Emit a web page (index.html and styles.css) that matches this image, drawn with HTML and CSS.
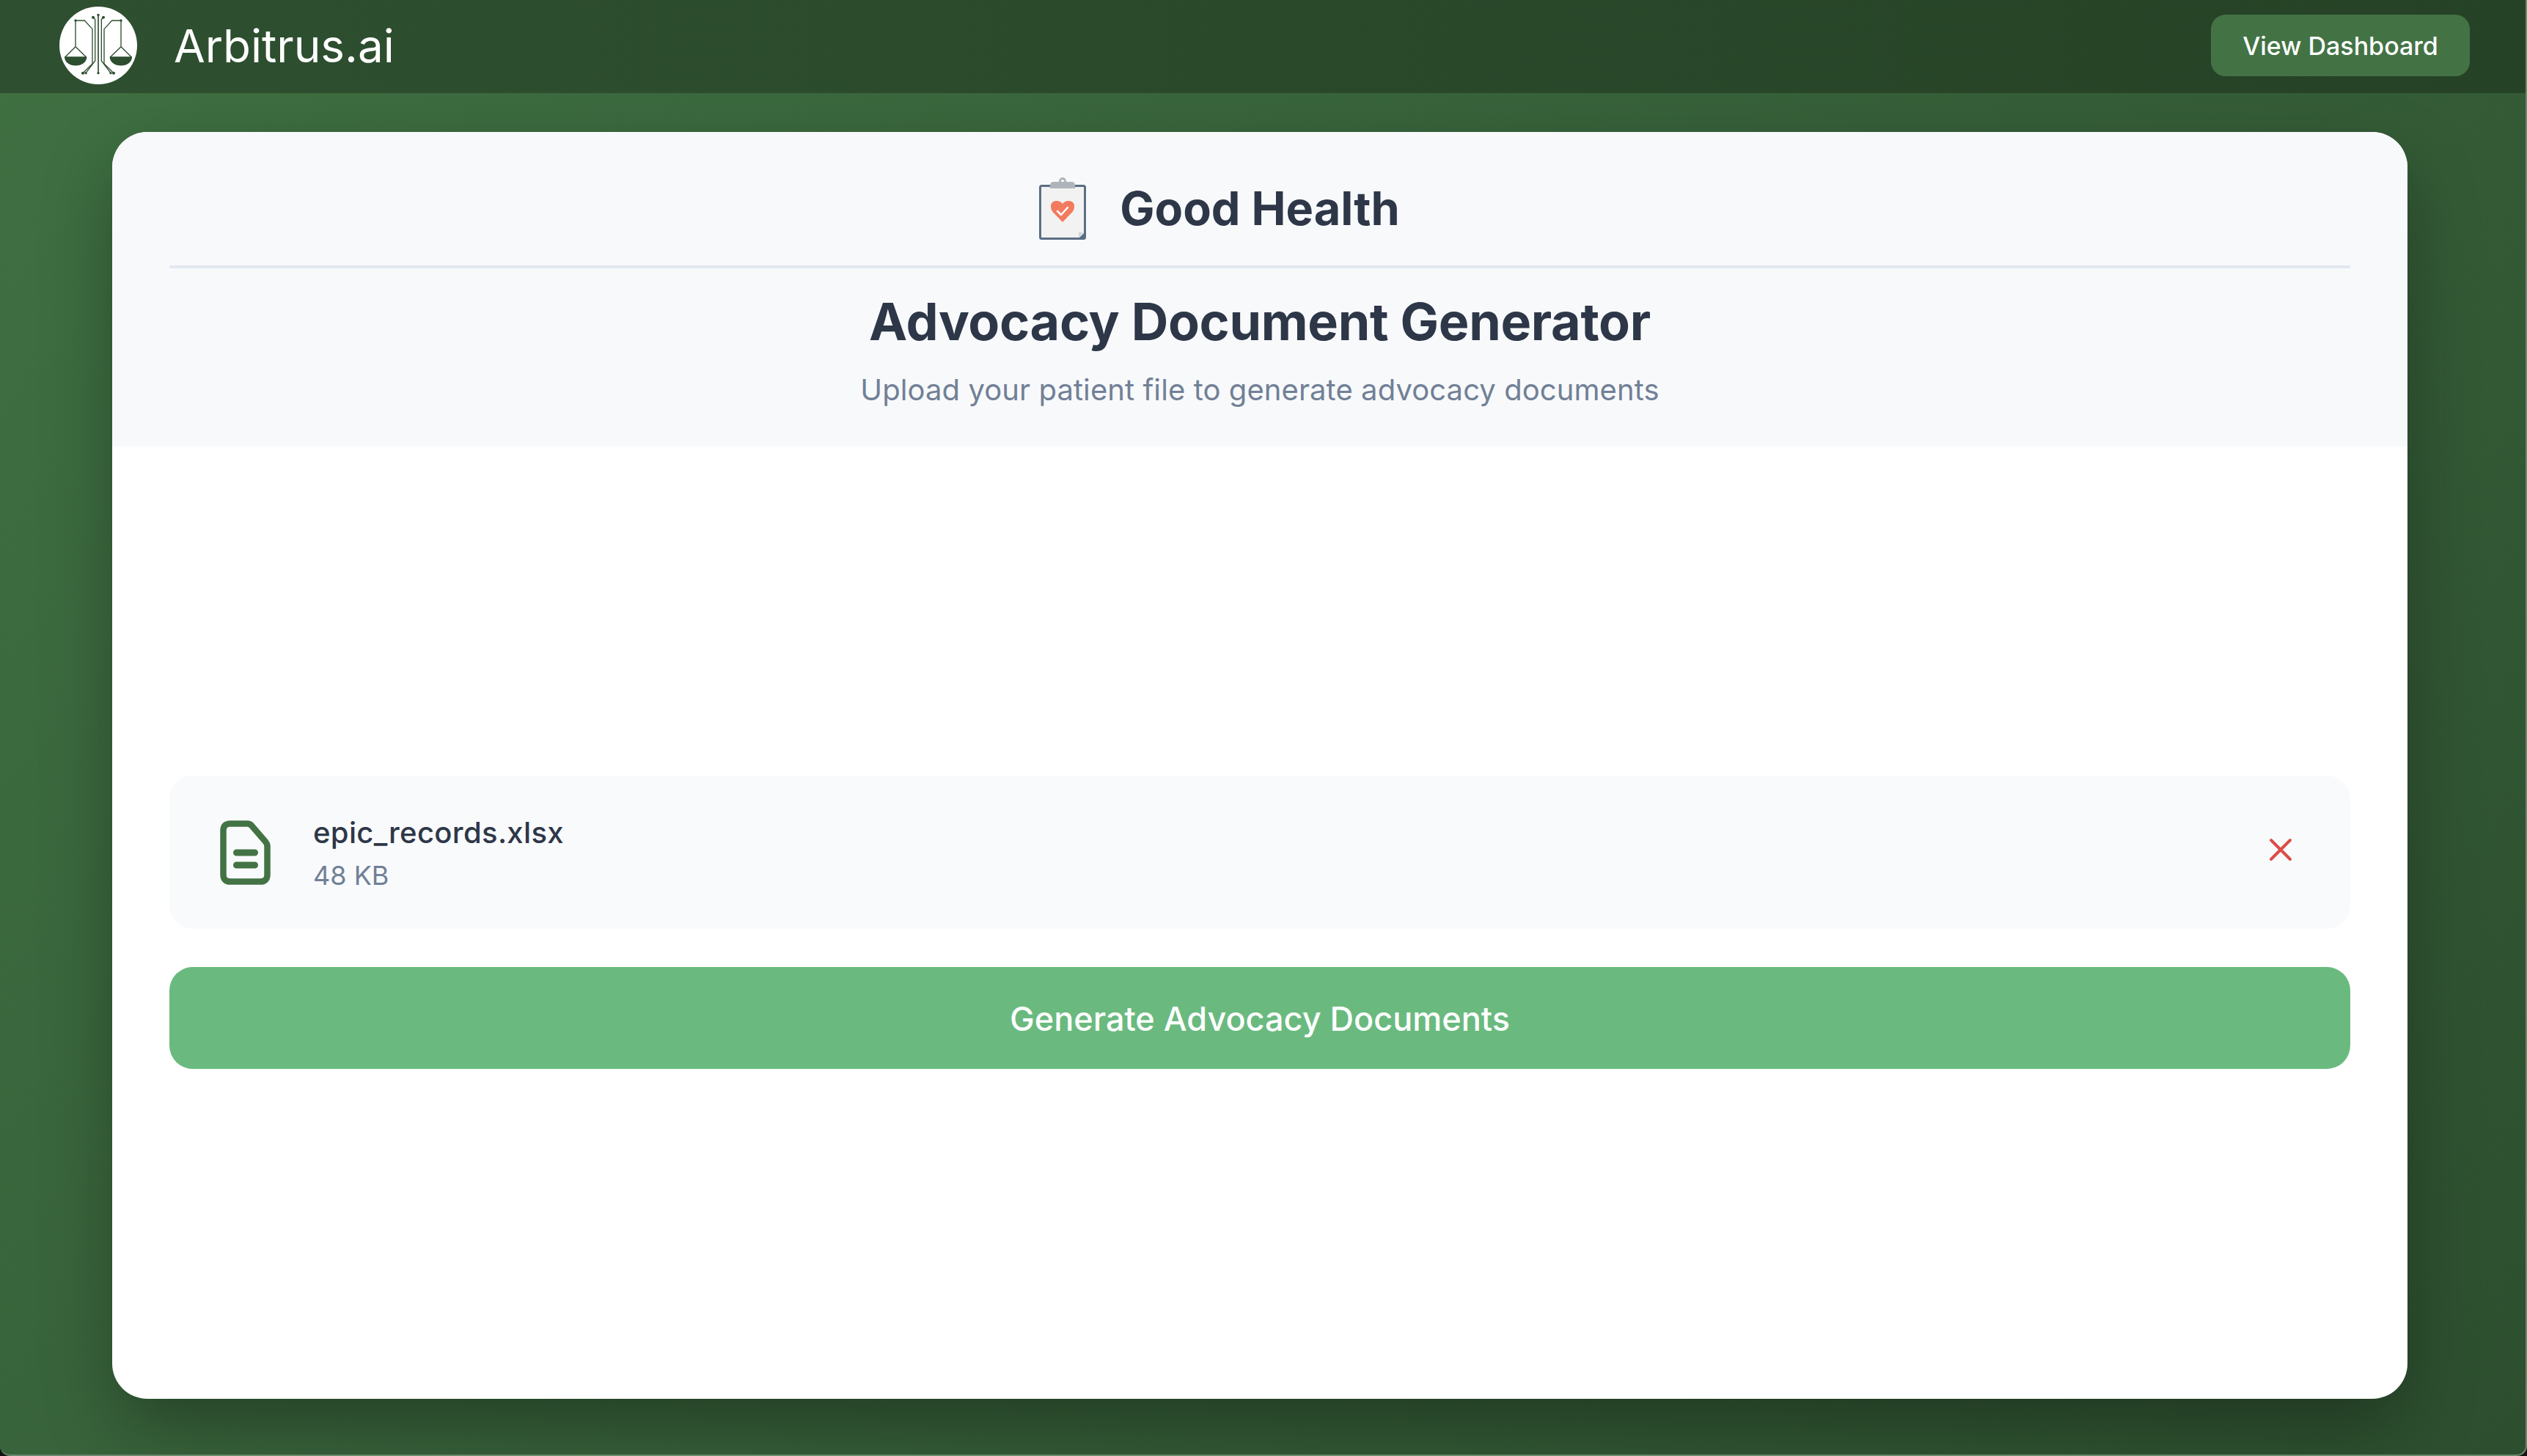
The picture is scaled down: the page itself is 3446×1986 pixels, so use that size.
FILE: index.html
```html
<html>

<head>
    <title>Arbitrus.ai</title>
    <link rel="stylesheet" href="styles.css">
</head>

<body>
    <div class="page">
        <header class="topbar">
            <div class="brand">
                <svg class="brand-logo" viewBox="62 28 318 318">
                    <circle cx="221" cy="187" r="159" fill="#fff"/>
                    <g id="scale-side" fill="none" stroke="#2d4f30" stroke-width="4">
                        <path d="M128 85H165L197 120V262L158 300"/>
                        <path d="M200 72L208 80V250L170 300"/>
                        <path d="M128 85V192M85 235L128 192L172 235"/>
                        <path d="M85 235H172A43 32 0 0 1 85 235Z" fill="#2d4f30"/>
                        <circle cx="128" cy="85" r="3" fill="#2d4f30"/>
                        <circle cx="200" cy="72" r="4" fill="#2d4f30"/>
                        <circle cx="158" cy="300" r="4" fill="#2d4f30"/>
                        <circle cx="170" cy="300" r="3" fill="#2d4f30"/>
                    </g>
                    <use href="#scale-side" transform="matrix(-1 0 0 1 442 0)"/>
                    <path d="M221 62V300" stroke="#2d4f30" stroke-width="5"/>
                    <circle cx="221" cy="62" r="5" fill="#2d4f30"/>
                    <circle cx="221" cy="300" r="5" fill="#2d4f30"/>
                </svg>
                <span class="brand-name">Arbitrus.ai</span>
            </div>
            <button class="dashboard-btn">View Dashboard</button>
        </header>

        <main class="main">
            <section class="card">
                <div class="card-head">
                    <div class="org">
                        <svg class="org-icon" viewBox="0 0 64 85">
                            <rect x="1.5" y="11.5" width="61" height="72" rx="2" fill="#f2f2f2" stroke="#5a6f84" stroke-width="3"/>
                            <path d="M54 83L63 74V83Z" fill="#5a6f84"/>
                            <path d="M54 75H60L54 82Z" fill="#cfd6dc"/>
                            <circle cx="32" cy="5" r="3.5" fill="#fff" stroke="#aeb4ba" stroke-width="3"/>
                            <path d="M15 15V11Q15 6 20 6H44Q49 6 49 11V15Z" fill="#aeb4ba"/>
                            <path d="M32 61L18.5 47Q16 44 16 40Q16 32 24 32Q29 32 32 36Q35 32 40 32Q48 32 48 40Q48 44 45.500 47Z" fill="#f27a5e"/>
                            <path d="M25 46L30 51L39 41" fill="none" stroke="#fff" stroke-width="2.500" stroke-linecap="round" stroke-linejoin="round"/>
                        </svg>
                        <span class="org-name">Good Health</span>
                    </div>
                    <h1 class="title">Advocacy Document Generator</h1>
                    <p class="subtitle">Upload your patient file to generate advocacy documents</p>
                </div>

                <div class="card-body">
                    <div class="file-row">
                        <svg class="file-icon" viewBox="0 0 69 88">
                            <path d="M14 4.500H37Q41 4.500 43 7L62 29Q64.500 32 64.500 35V74Q64.500 83.500 55 83.500H14Q4.500 83.500 4.500 74V14Q4.500 4.500 14 4.500Z" fill="none" stroke="#437345" stroke-width="8.500"/>
                            <path d="M22.500 44H47.500M22.500 61H47.500" stroke="#437345" stroke-width="9" stroke-linecap="round"/>
                        </svg>
                        <div class="file-info">
                            <div class="file-name">epic_records.xlsx</div>
                            <div class="file-size">48 KB</div>
                        </div>
                        <svg class="remove-icon" viewBox="0 0 32 32">
                            <path d="M3 3L29 29M29 3L3 29" stroke="#dc4c46" stroke-width="4" stroke-linecap="round"/>
                        </svg>
                    </div>
                    <button class="generate-btn">Generate Advocacy Documents</button>
                </div>
            </section>
        </main>
    </div>
</body>

</html>
```

FILE: styles.css
```css
html, body{
    margin: 0;
    height: 100%;
    background: #141414;
}

body{
    font-family: "Inter", "Liberation Sans", sans-serif;
}

.page{
    box-sizing: border-box;
    height: 100vh;
    display: flex;
    flex-direction: column;
    overflow: hidden;
    background: linear-gradient(135deg, #3f7042, #2d4f2f);
    border-right: 2px solid #6a8a6c;
    border-bottom: 2px solid #6a8a6c;
    border-radius: 0 0 14px 14px;
}

.topbar{
    position: relative;
    z-index: 1;
    flex: none;
    height: 127px;
    box-sizing: border-box;
    display: flex;
    align-items: center;
    justify-content: space-between;
    padding: 0 76px 3px 81px;
    background: linear-gradient(90deg, #2e5030, #264226);
}

.brand{
    display: flex;
    align-items: center;
}

.brand-logo{
    width: 106px;
    height: 106px;
}

.brand-name{
    margin-left: 50px;
    font-size: 62px;
    color: #fff;
}

.dashboard-btn{
    width: 353px;
    height: 84px;
    border: 0;
    border-radius: 20px;
    background: #437345;
    color: #fff;
    font-family: inherit;
    font-size: 34px;
    font-weight: 500;
}

.main{
    flex: 1;
    min-height: 0;
    display: flex;
    padding: 53px 161px 76px 153px;
}

.card{
    flex: 1;
    display: flex;
    flex-direction: column;
    overflow: hidden;
    border-radius: 48px;
    background: #fff;
    box-shadow: 0 40px 100px -10px rgba(0, 0, 0, 0.35);
}

.card-head{
    flex: none;
    height: 429px;
    box-sizing: border-box;
    padding: 0 78px;
    background: #f8f9fb;
    text-align: center;
}

.org{
    height: 186px;
    box-sizing: border-box;
    display: flex;
    align-items: center;
    justify-content: center;
    padding: 26px 110px 0 0;
    border-bottom: 4px solid #e2e8f0;
}

.org-icon{
    width: 64px;
    height: 85px;
    margin-right: 46px;
}

.org-name{
    font-size: 63px;
    font-weight: 700;
    color: #2d3748;
}

.title{
    margin: 29px 0 0;
    font-size: 70px;
    line-height: 88px;
    font-weight: 700;
    letter-spacing: -0.3px;
    color: #2d3748;
}

.subtitle{
    margin: 25px 0 0;
    font-size: 40px;
    line-height: 48px;
    letter-spacing: 0.08px;
    color: #718096;
}

.card-body{
    flex: 1;
    display: flex;
    flex-direction: column;
    justify-content: center;
    padding: 0 78px 1px;
}

.file-row{
    height: 209px;
    box-sizing: border-box;
    display: flex;
    align-items: center;
    padding: 0 70px 0 69px;
    border-radius: 32px;
    background: #f9fafc;
}

.file-icon{
    width: 69px;
    height: 88px;
}

.file-info{
    flex: 1;
    margin-left: 58px;
}

.file-name{
    font-size: 40px;
    line-height: 52px;
    font-weight: 500;
    letter-spacing: 0.35px;
    color: #2d3748;
}

.file-size{
    margin-top: 10px;
    font-size: 36px;
    line-height: 44px;
    color: #718096;
}

.remove-icon{
    width: 32px;
    height: 32px;
    margin: 0 9px 8px 0;
}

.generate-btn{
    height: 139px;
    margin-top: 52px;
    padding: 2px 0 0;
    border: 0;
    border-radius: 32px;
    background: #6aba7f;
    color: #fff;
    font-family: inherit;
    font-size: 45px;
    font-weight: 500;
}
```
